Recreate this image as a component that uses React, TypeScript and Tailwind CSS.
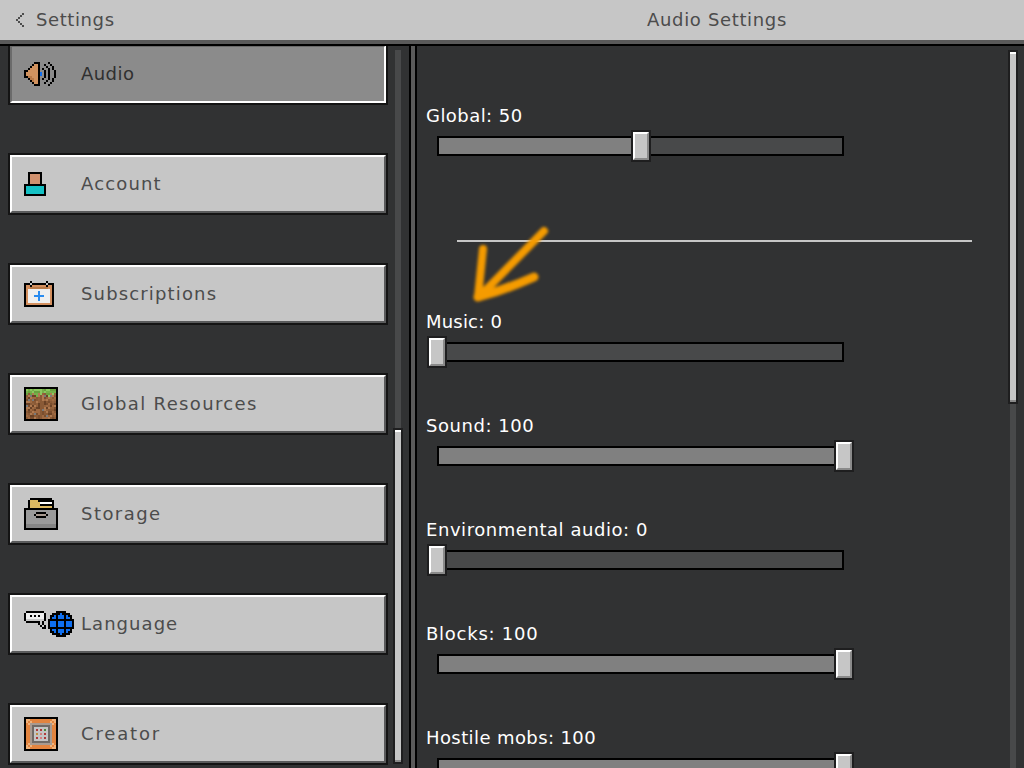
import React from "react";

const palette: Record<string, string> = {
  k: "#000000", d: "#1e1e1f", O: "#d2935f", o: "#b97a48", b: "#0f6ff0", B: "#2a8cf0", W: "#efefef", w: "#ffffff",
  G: "#c6c6c6", g: "#9a9a9a", h: "#858585", Y: "#dcb962", H: "#d0916e", C: "#16c1c4", T: "#d38f5e",
  e: "#e2843f", E: "#f0b27a", s: "#6f6a66", S: "#a89a90", L: "#c4c4c4", r: "#b03a3a", n: "#4a8a3a", y: "#c09040", p: "#d08080",
  c: "#4c4c4c",
};

function Pixels({ rows, unit = 2 }: { rows: string[]; unit?: number }) {
  const w = Math.max(...rows.map((r) => r.length));
  return (
    <svg width={w * unit} height={rows.length * unit} viewBox={`0 0 ${w} ${rows.length}`} shapeRendering="crispEdges" className="block shrink-0">
      {rows.map((row, y) =>
        row.split("").map((ch, x) => (palette[ch] ? <rect key={`${x}-${y}`} x={x} y={y} width={1} height={1} fill={palette[ch]} /> : null))
      )}
    </svg>
  );
}

const audioIcon = [
  ".....kkk....k...",
  "....kOOk..k..k..",
  "...kOOOk...k..k.",
  "..kTOOOk.k..k.k.",
  "kkOOOOOk..k.k..k",
  "kOOOOOOkb.k.k..k",
  "kOOOOOOkb.k.k..k",
  "kkooOOOk..k.k..k",
  "..kooOOk.k..k.k.",
  "...koOOk...k..k.",
  "....kOOk..k..k..",
  ".....kkk....k...",
];
const accountIcon = [
  "..kkkkkkk..",
  "..kHHHHHk..",
  "..kHHHHHk..",
  "..kHHHHHk..",
  "..kHHHHHk..",
  "..kHHHHHk..",
  "kkkkkkkkkkk",
  "kCCCCCCCCCk",
  "kCCCCCCCCCk",
  "kCCCCCCCCCk",
  "kCCCCCCCCCk",
  "kkkkkkkkkkk",
];
const subsIcon = [
  "...k.......k...",
  "kkkGkkkkkkkGkkk",
  "kTTkTTTTTTTkTTk",
  "kTToooooooooTTk",
  "kTWWWWWWWWWWWTk",
  "kTWWWWWBWWWWWTk",
  "kTWWWWWBWWWWWTk",
  "kTWWWBBBBBWWWTk",
  "kTWWWWWBWWWWWTk",
  "kTWWWWWBWWWWWTk",
  "kTWWWWWWWWWWWTk",
  "kTTTTTTTTTTTTTk",
  "kkkkkkkkkkkkkkk",
];
const storageIcon = [
  "...kkkkkkkkkkk...",
  "..kYYYYkkkkkkkk..",
  "..kYYYYYwwwwwwk..",
  "..kYYYYYkkkkkkk..",
  "..kYYYYYYYYYYYk..",
  "kkkkkkkkkkkkkkkkk",
  "kgggggggggggggggk",
  "kgggggkkkkkgggggk",
  "kggggkSSSSSkggggk",
  "kgggggkkkkkgggggk",
  "kgggggggggggggggk",
  "kgggggggggggggggk",
  "kgggggggggggggggk",
  "khhhhhhhhhhhhhhhk",
  "khhhhhhhhhhhhhhhk",
  "kkkkkkkkkkkkkkkkk",
];
const bubbleIcon = [
  ".kkkkkkkkk.",
  "kWWWWWWWWWk",
  "kWWkWkWkWWk",
  "kWWWWWWWWWk",
  "kGGGGGGGGGk",
  ".kkkkkkkGk.",
  ".......kGk.",
  "........kGk",
  ".........kk",
];
const globeIcon = [
  "....kkkkk....",
  "..kkkkbkkkk..",
  ".kkbkbbbkbkk.",
  ".kbbkbbbkbbk.",
  "kkkkkkkkkkkkk",
  "kbbbkbbbkbbbk",
  "kbbbkbbbkbbbk",
  "kbbbkbbbkbbbk",
  "kkkkkkkkkkkkk",
  ".kbbkbbbkbbk.",
  ".kkbkbbbkbkk.",
  "..kkkkbkkkk..",
  "....kkkkk....",
];
const creatorIcon = [
  "kkkkkkkkkkkkkkkkk",
  "kEEeeeeeeeeeeeEEk",
  "kEeEeeeeeeeeeEeEk",
  "keESSSSSSSSSSSEek",
  "keeSsssssssssSeek",
  "keeSsLLLLLLLsSeek",
  "keeSsLrLrLnLsSeek",
  "keeSsLLLLLLLsSeek",
  "keeSsLyLpLrLsSeek",
  "keeSsLLLLLLLsSeek",
  "keeSsLrLpLrLsSeek",
  "keeSsLLLLLLLsSeek",
  "keeSsssssssssSeek",
  "keESSSSSSSSSSSEek",
  "kEeEeeeeeeeeeEeEk",
  "kEEeeeeeeeeeeeEEk",
  "kkkkkkkkkkkkkkkkk",
];
const chevron = ["...c", "..c.", ".c..", "c...", ".c..", "..c.", "...c"];

function GrassIcon() {
  const dirt = ["#8a5a36", "#7a4e2e", "#a06a42", "#6a4226", "#94623c", "#b07a50", "#7a7a7a"];
  const cells: React.ReactNode[] = [];
  for (let y = 0; y < 15; y++) {
    for (let x = 0; x < 15; x++) {
      const drip = [3, 2, 3, 2, 3, 4, 2, 3, 2, 2, 3, 4, 2, 3, 2][x];
      const h = (x * 37 + y * 61 + x * y * 13 + ((x * x) % 7) * 5) % 19;
      const fill = y < drip ? (h % 3 === 0 ? "#8cc860" : h % 3 === 1 ? "#76b04a" : "#6aa23f") : dirt[h % 7 === 6 && h > 12 ? 6 : h % 6];
      cells.push(<rect key={`${x}-${y}`} x={x + 1} y={y + 1} width={1} height={1} fill={fill} />);
    }
  }
  return (
    <svg width={34} height={34} viewBox="0 0 17 17" shapeRendering="crispEdges" className="block shrink-0">
      <rect width={17} height={17} fill="#000000" />
      {cells}
    </svg>
  );
}

function NavButton({ label, icon, selected = false, tracking }: { label: string; icon: React.ReactNode; selected?: boolean; tracking: string }) {
  return (
    <div className="h-[62px] w-[380px] shrink-0 border-2 border-[#141414]">
      <div
        className={
          selected
            ? "flex h-full items-center border-2 border-t-[#6b6b6b] border-l-[#6b6b6b] border-r-white border-b-white bg-[#8b8b8b] pl-3 text-[#303030]"
            : "flex h-full items-center border-2 border-t-white border-l-white border-r-[#5a5b5c] border-b-[#5a5b5c] bg-[#c6c6c6] pl-3 text-[#4c4c4c]"
        }
      >
        <div className="flex w-[57px] shrink-0 items-center">{icon}</div>
        <span className={`whitespace-nowrap text-[18px] leading-5 ${tracking}`}>{label}</span>
      </div>
    </div>
  );
}

function Slider({ label, value, tracking, className = "mb-[53px]" }: { label: string; value: number; tracking: string; className?: string }) {
  return (
    <div className={`shrink-0 ${className}`}>
      <div className={`mb-2.5 ml-[9px] h-[21px] whitespace-nowrap pt-px text-[18px] leading-5 text-white ${tracking}`}>{label}</div>
      <div className="relative ml-5 h-5 w-[407px]">
        <div className="h-full border-2 border-black bg-[#48494a]">
          <div className="h-full bg-[#808080]" style={{ width: `${value}%` }} />
        </div>
        <div
          className="absolute top-[-6px] ml-[-10px] h-8 w-5 border-2 border-[#1e1e1f] bg-[#c6c6c6]"
          style={{ left: `${Math.round((value / 100) * 407)}px` }}
        >
          <div className="h-full w-full border-2 border-t-white border-l-white border-r-[#8a8a8a] border-b-[#8a8a8a]" />
        </div>
      </div>
    </div>
  );
}

function Thumb({ height }: { height: string }) {
  return (
    <div className={`w-2.5 shrink-0 border-2 border-[#1e1e1f] bg-[#c6c6c6] ${height}`}>
      <div className="h-full w-full border-t-2 border-b-2 border-t-white border-b-[#8a8a8a]" />
    </div>
  );
}

export default function App() {
  return (
    <div className="relative flex h-[768px] w-[1024px] flex-col overflow-hidden bg-[#313233] font-['DejaVu_Sans',sans-serif]">
      <header className="flex h-[46px] shrink-0 border-b-2 border-black bg-[#5a5a5a] pb-1">
        <div className="flex h-10 w-full bg-[#c6c6c6] text-[#4c4c4c]">
          <div className="flex w-[410px] shrink-0 items-center gap-3 pl-4">
            <Pixels rows={chevron} />
            <span className="text-[18px] leading-5 tracking-[0.6px]">Settings</span>
          </div>
          <div className="flex flex-1 items-center justify-center">
            <span className="whitespace-nowrap text-[18px] leading-5 tracking-[0.65px]">Audio Settings</span>
          </div>
        </div>
      </header>
      <main className="flex min-h-0 flex-1">
        <section className="flex w-[409px] shrink-0 overflow-hidden">
          <div className="mt-[-3px] flex w-[388px] shrink-0 flex-col gap-12 pl-2">
            <NavButton label="Audio" selected tracking="tracking-[0.45px]" icon={<Pixels rows={audioIcon} />} />
            <NavButton label="Account" tracking="tracking-[1.15px]" icon={<Pixels rows={accountIcon} />} />
            <NavButton label="Subscriptions" tracking="tracking-[1.15px]" icon={<Pixels rows={subsIcon} />} />
            <NavButton label="Global Resources" tracking="tracking-[1.35px]" icon={<GrassIcon />} />
            <NavButton label="Storage" tracking="tracking-[1.45px]" icon={<Pixels rows={storageIcon} />} />
            <NavButton
              label="Language"
              tracking="tracking-[1.05px]"
              icon={
                <div className="flex items-start gap-0.5">
                  <Pixels rows={bubbleIcon} />
                  <Pixels rows={globeIcon} />
                </div>
              }
            />
            <NavButton label="Creator" tracking="tracking-[1.85px]" icon={<Pixels rows={creatorIcon} />} />
          </div>
          <div className="ml-[5px] flex w-2.5 shrink-0 flex-col items-center pt-1">
            <div className="h-[378px] w-1.5 shrink-0 bg-[#48494a]" />
            <Thumb height="h-[336px]" />
          </div>
        </section>
        <div className="w-2 shrink-0 border-x-2 border-black bg-[#5a5a5a]" />
        <section className="flex min-w-0 flex-1 overflow-hidden">
          <div className="w-[591px] shrink-0 pt-[59px]">
            <Slider label="Global: 50" value={50} tracking="tracking-[0.45px]" className="" />
            <div className="ml-10 mb-[69px] mt-[84px] h-0.5 w-[515px] bg-[#c6c6c6]" />
            <Slider label="Music: 0" value={0} tracking="tracking-[0.2px]" />
            <Slider label="Sound: 100" value={100} tracking="tracking-[0.55px]" />
            <Slider label="Environmental audio: 0" value={0} tracking="tracking-[0.55px]" />
            <Slider label="Blocks: 100" value={100} tracking="tracking-[0.75px]" />
            <Slider label="Hostile mobs: 100" value={100} tracking="tracking-[0.4px]" />
          </div>
          <div className="flex w-2.5 shrink-0 flex-col items-center pt-1">
            <Thumb height="h-[354px]" />
            <div className="w-1.5 flex-1 bg-[#48494a]" />
          </div>
        </section>
      </main>
      <svg width={90} height={90} viewBox="0 0 90 90" className="absolute left-[465px] top-[220px] blur-[1.5px]">
        <path d="M79 11 L14 77" stroke="#f59b00" strokeWidth={8} strokeLinecap="round" fill="none" />
        <path d="M18 29 L13 77" stroke="#f59b00" strokeWidth={8} strokeLinecap="round" fill="none" />
        <path d="M13 77 Q40 70 69 57" stroke="#f59b00" strokeWidth={9} strokeLinecap="round" fill="none" />
      </svg>
    </div>
  );
}
